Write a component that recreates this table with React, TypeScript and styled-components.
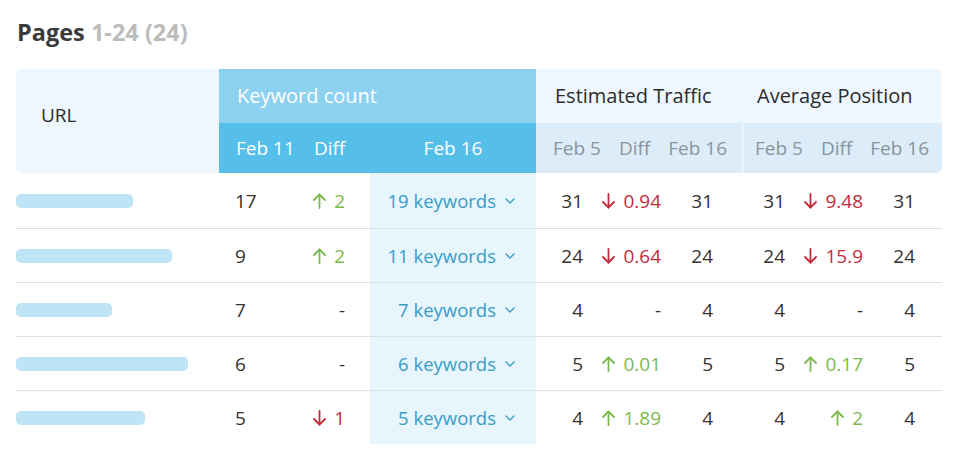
import React from "react";
import styled, { createGlobalStyle } from "styled-components";

const Global = createGlobalStyle`
  html, body { margin: 0; padding: 0; background: #ffffff; }
  body { font-family: "Open Sans", "Noto Sans", sans-serif; color: #333; }
  * { box-sizing: border-box; }
`;

const Page = styled.div`
  padding: 16px 23px 0 16px;
  width: 965px;
`;

const Title = styled.h2`
  margin: 0 0 20px 1px;
  font-size: 23.5px;
  line-height: 33px;
  font-weight: 700;
  color: #3b3b3b;
`;

const Muted = styled.span`
  color: #bcbcbc;
`;

const Header = styled.div`
  display: grid;
  grid-template-columns: 203px 317px 206px 200px;
  grid-template-rows: 54px 50px;
  border-radius: 6px;
  overflow: hidden;
`;

const UrlHead = styled.div`
  grid-row: 1 / span 2;
  background: #eef7fe;
  display: flex;
  align-items: center;
  padding: 0 0 12px 25px;
  font-size: 19px;
  color: #2c2c2c;
`;

const GroupTitle = styled.div<{ $accent?: boolean; $pad: number }>`
  background: ${(p) => (p.$accent ? "#8cd2f0" : "#eef7fd")};
  color: ${(p) => (p.$accent ? "#ffffff" : "#2c2c2c")};
  display: flex;
  align-items: center;
  padding-left: ${(p) => p.$pad}px;
  padding-bottom: 2px;
  font-size: 20px;
`;

const SubRow = styled.div<{ $accent?: boolean; $divider?: boolean }>`
  background: ${(p) => (p.$accent ? "#55bee9" : "#dcedf9")};
  color: ${(p) => (p.$accent ? "#ffffff" : "#8a949b")};
  border-left: ${(p) => (p.$divider ? "2px solid #e9f4fc" : "none")};
  display: flex;
  align-items: center;
  font-size: 19px;
`;

const KwSubGrid = styled(SubRow)`
  display: grid;
  grid-template-columns: 81px 70px 166px;
`;

const SubLabel = styled.span<{ $pad?: number; $center?: boolean }>`
  padding-left: ${(p) => p.$pad ?? 0}px;
  text-align: ${(p) => (p.$center ? "center" : "left")};
`;

const FlexLabels = styled.div<{ $pad: number }>`
  display: flex;
  gap: 18px;
  padding-left: ${(p) => p.$pad}px;
`;

const Body = styled.div``;

const Row = styled.div<{ $first?: boolean }>`
  display: grid;
  grid-template-columns: 203px 81px 70px 166px 64px 78px 64px 60px 78px 62px;
  height: ${(p) => (p.$first ? 55 : 54)}px;
  border-top: ${(p) => (p.$first ? "none" : "1px solid #dedfe0")};
  font-size: 19px;
  color: #333;
`;

const Cell = styled.div<{ $align?: "left" | "right"; $pr?: number; $pl?: number }>`
  display: flex;
  align-items: center;
  justify-content: ${(p) => (p.$align === "left" ? "flex-start" : "flex-end")};
  padding-right: ${(p) => p.$pr ?? 0}px;
  padding-left: ${(p) => p.$pl ?? 0}px;
`;

const KwCell = styled(Cell)`
  background: #e7f5fc;
  color: #3a9cc7;
  font-size: 18.5px;
  gap: 9px;
`;

const UrlBar = styled.div`
  height: 14px;
  border-radius: 5px;
  background: #bfe4f5;
`;

const Delta = styled.span<{ $dir: "up" | "down" | "none" }>`
  display: inline-flex;
  align-items: center;
  gap: 8px;
  color: ${(p) => (p.$dir === "up" ? "#7cba4e" : p.$dir === "down" ? "#c32b3c" : "#333")};
`;

const Arrow = ({ dir }: { dir: "up" | "down" }) => (
  <svg width="13" height="16" viewBox="0 0 13 16" fill="none" stroke="currentColor" strokeWidth="1.8" strokeLinecap="round" strokeLinejoin="round">
    {dir === "up" ? (
      <>
        <path d="M6.5 15V1.5" />
        <path d="M1 7L6.5 1.5L12 7" />
      </>
    ) : (
      <>
        <path d="M6.5 1V14.5" />
        <path d="M1 9L6.5 14.5L12 9" />
      </>
    )}
  </svg>
);

const Chevron = () => (
  <svg width="10" height="6" viewBox="0 0 10 6" fill="none" stroke="currentColor" strokeWidth="1.4" strokeLinecap="round" strokeLinejoin="round">
    <path d="M1 1L5 5L9 1" />
  </svg>
);

type D = { v: string; dir: "up" | "down" | "none" };
type RowData = {
  bar: number;
  k11: string;
  kd: D;
  kw: string;
  t5: string;
  td: D;
  t16: string;
  a5: string;
  ad: D;
  a16: string;
};

const rows: RowData[] = [
  { bar: 117, k11: "17", kd: { v: "2", dir: "up" }, kw: "19 keywords", t5: "31", td: { v: "0.94", dir: "down" }, t16: "31", a5: "31", ad: { v: "9.48", dir: "down" }, a16: "31" },
  { bar: 156, k11: "9", kd: { v: "2", dir: "up" }, kw: "11 keywords", t5: "24", td: { v: "0.64", dir: "down" }, t16: "24", a5: "24", ad: { v: "15.9", dir: "down" }, a16: "24" },
  { bar: 96, k11: "7", kd: { v: "-", dir: "none" }, kw: "7 keywords", t5: "4", td: { v: "-", dir: "none" }, t16: "4", a5: "4", ad: { v: "-", dir: "none" }, a16: "4" },
  { bar: 172, k11: "6", kd: { v: "-", dir: "none" }, kw: "6 keywords", t5: "5", td: { v: "0.01", dir: "up" }, t16: "5", a5: "5", ad: { v: "0.17", dir: "up" }, a16: "5" },
  { bar: 129, k11: "5", kd: { v: "1", dir: "down" }, kw: "5 keywords", t5: "4", td: { v: "1.89", dir: "up" }, t16: "4", a5: "4", ad: { v: "2", dir: "up" }, a16: "4" },
];

const DeltaView = ({ d }: { d: D }) => (
  <Delta $dir={d.dir}>
    {d.dir !== "none" && <Arrow dir={d.dir} />}
    {d.v}
  </Delta>
);

export default function App() {
  return (
    <>
      <Global />
      <Page>
        <Title>
          Pages <Muted>1-24 (24)</Muted>
        </Title>
        <Header>
          <UrlHead>URL</UrlHead>
          <GroupTitle $accent $pad={18}>Keyword count</GroupTitle>
          <GroupTitle $pad={19}>Estimated Traffic</GroupTitle>
          <GroupTitle $pad={15}>Average Position</GroupTitle>
          <KwSubGrid $accent>
            <SubLabel $pad={17}>Feb 11</SubLabel>
            <SubLabel $pad={14}>Diff</SubLabel>
            <SubLabel $center>Feb 16</SubLabel>
          </KwSubGrid>
          <SubRow>
            <FlexLabels $pad={17}>
              <span>Feb 5</span>
              <span>Diff</span>
              <span>Feb 16</span>
            </FlexLabels>
          </SubRow>
          <SubRow $divider>
            <FlexLabels $pad={11}>
              <span>Feb 5</span>
              <span>Diff</span>
              <span>Feb 16</span>
            </FlexLabels>
          </SubRow>
        </Header>
        <Body>
          {rows.map((r, i) => (
            <Row key={i} $first={i === 0}>
              <Cell $align="left">
                <UrlBar style={{ width: r.bar }} />
              </Cell>
              <Cell $align="left" $pl={16}>{r.k11}</Cell>
              <Cell $pr={25}>
                <DeltaView d={r.kd} />
              </Cell>
              <KwCell $pr={21}>
                {r.kw}
                <Chevron />
              </KwCell>
              <Cell $pr={17}>{r.t5}</Cell>
              <Cell $pr={17}>
                <DeltaView d={r.td} />
              </Cell>
              <Cell $pr={29}>{r.t16}</Cell>
              <Cell $pr={17}>{r.a5}</Cell>
              <Cell $pr={17}>
                <DeltaView d={r.ad} />
              </Cell>
              <Cell $pr={27}>{r.a16}</Cell>
            </Row>
          ))}
        </Body>
      </Page>
    </>
  );
}
